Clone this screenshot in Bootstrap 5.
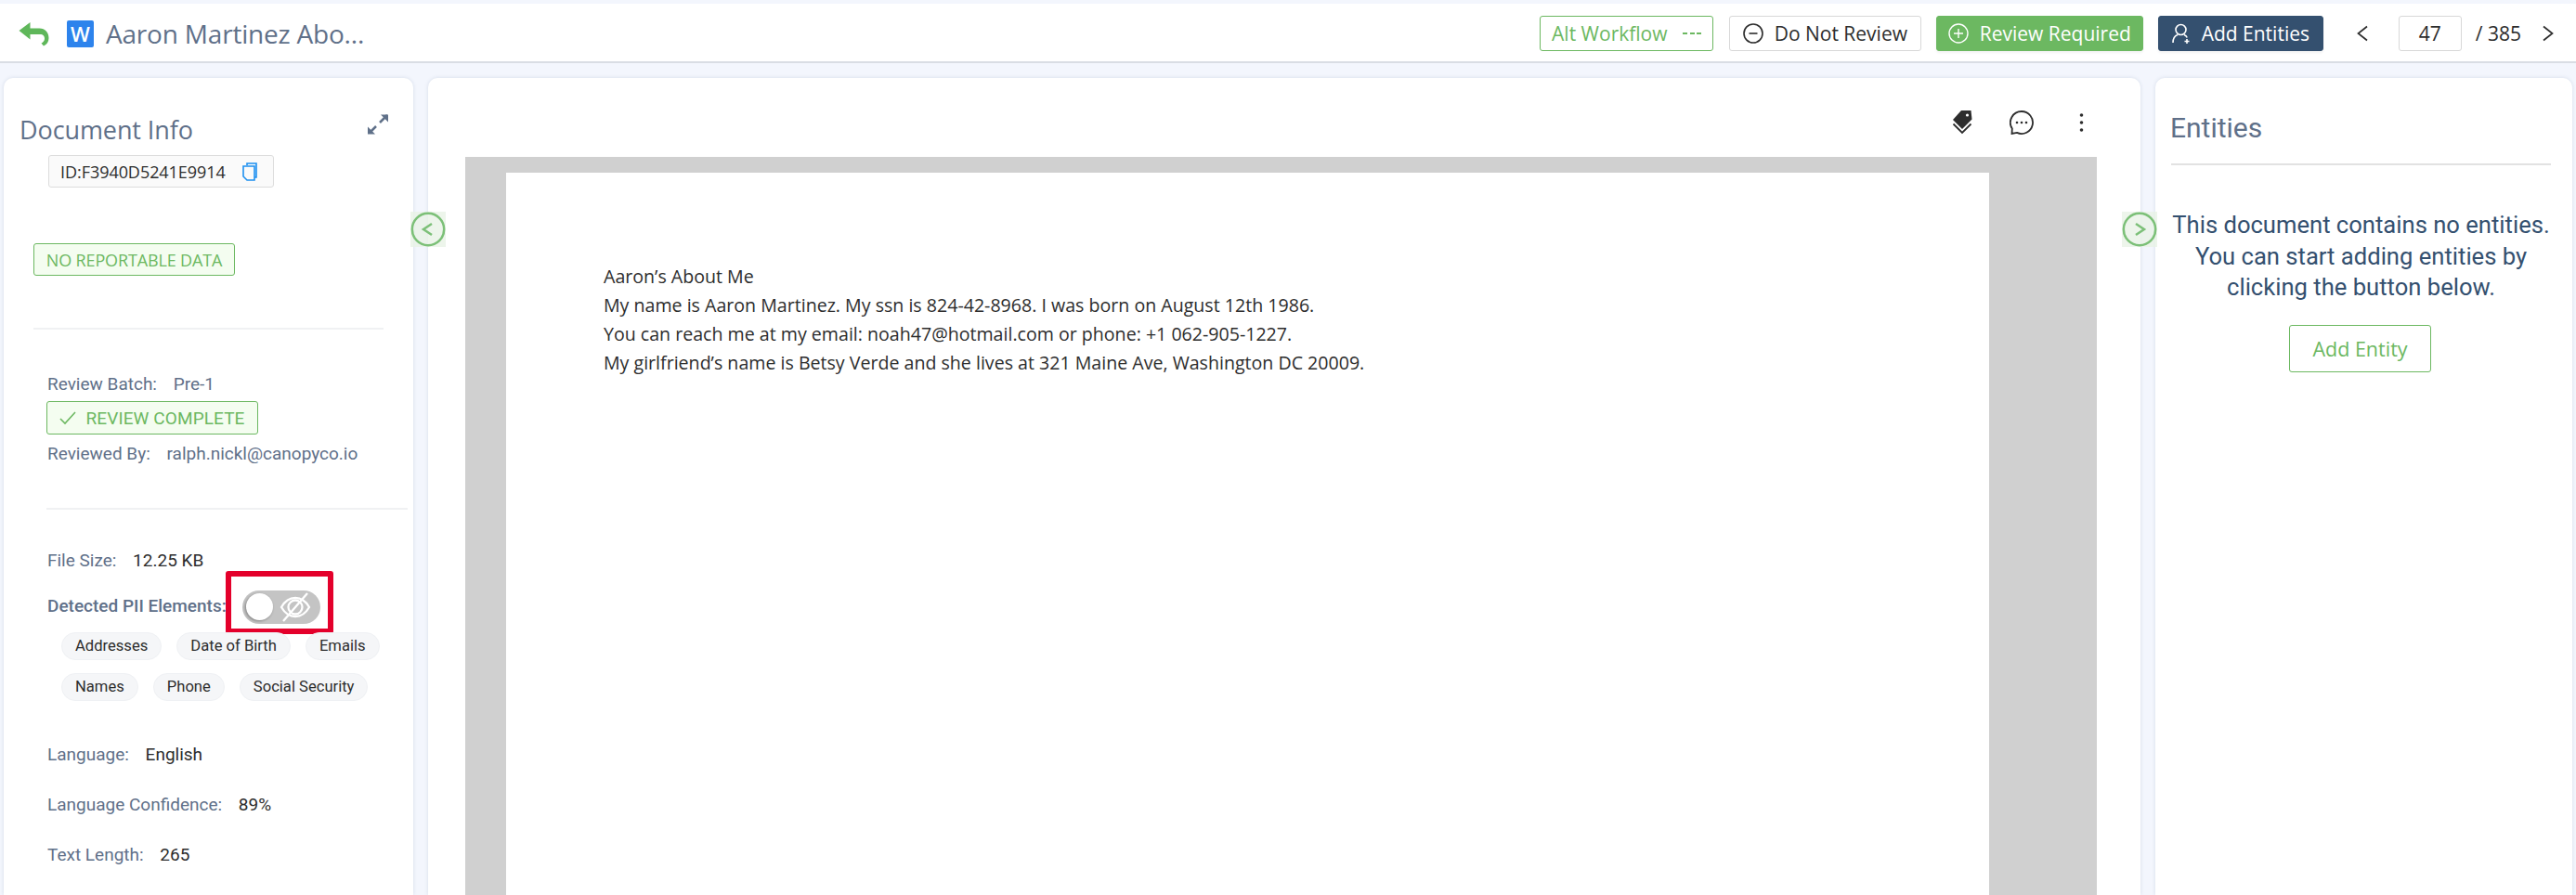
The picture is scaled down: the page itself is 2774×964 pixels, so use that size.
<!DOCTYPE html>
<html lang="en">
<head>
<meta charset="utf-8">
<title>Document review</title>
<link href="https://cdn.jsdelivr.net/npm/bootstrap@5.3.0/dist/css/bootstrap.min.css" rel="stylesheet">
<style>
:root{--g:#6cb861;--navy:#34506f;--slate:#5f7089;--ink:#2d2d2d;--seg:"Open Sans","Noto Sans",sans-serif;--rob:Roboto,sans-serif;}
html,body{height:964px;overflow:hidden}
body{background:#f3f6fd;font-family:var(--rob);color:var(--ink);width:2774px;padding-top:4px}
.topbar{height:64px;background:#fff;border-bottom:2px solid #d9dde4;padding:2px 24px 0 20px}
.doc-title{font-family:var(--seg);font-size:28px;color:var(--slate);margin-left:13px;line-height:1;letter-spacing:-.2px}
.w-logo{width:29px;height:29px;background:#2d83ec;border-radius:2px;color:#fff;font:600 22px/29px var(--seg);text-align:center;margin-left:19px}
.tb-btn{height:38px;padding:0;font-family:var(--seg);font-size:21px;line-height:1;border-radius:3px;display:flex;align-items:center;justify-content:center;gap:12px}
.tb-alt{width:187px;color:var(--g);border:1px solid var(--g);background:#fff;gap:16px}
.tb-dnr{width:207px;margin-left:17px;color:var(--ink);border:1px solid #d8d8d8;background:#fff}
.tb-req{width:223px;margin-left:16px;background:var(--g);color:#fff;border:1px solid var(--g);box-shadow:0 2px 3px #0000000d}
.tb-add{width:178px;margin-left:16px;background:var(--navy);color:#fff;border:1px solid var(--navy);box-shadow:0 2px 3px #0000000d}
.pager-in{width:68px;height:38px;margin:0 15px 0 33px;padding:0;border-radius:3px;text-align:center;font:21px var(--seg);color:var(--ink);border-color:#d8d8d8}
.pager-of{font:21px var(--seg);color:var(--ink);margin-right:23px}
.chev{color:var(--ink);margin-left:36px;display:block}
.work{gap:16px;padding:16px 4px 0;height:896px}
.pane{background:#fff;border-radius:10px 10px 0 0;box-shadow:0 0 4px #1f3a6b22;height:880px;overflow:hidden}
.pane-l{width:441px;flex:none;padding:0 6px 0 17px}
.pane-c{width:1844px;flex:none;padding:0 47px 0 40px}
.pane-r{width:449px;flex:none;padding:0 24px 0 17px}
.pane-h{color:var(--slate);line-height:32px}
.info-h{font-family:var(--seg);font-size:27px;margin-top:38px;line-height:36px;letter-spacing:-.1px}
.id-tag{margin:9px 0 0 31px;width:243px;height:35px;background:#fafafa;border:1px solid #ddd;border-radius:3px;font:18px var(--seg);padding-left:12px;gap:18px;letter-spacing:-.05px}
.flag{border:1px solid var(--g);background:#f4fdf0;color:var(--g);border-radius:3px;font:18px/1 var(--seg);letter-spacing:-.15px}
.flag-nr{margin:60px 0 0 15px;width:217px;height:35px}
.flag-rc{margin:6px 0 0 29px;width:228px;height:36px;gap:10px;font-family:var(--rob);font-size:19px;letter-spacing:.1px}
.soft-hr{height:2px;background:#f0f1f3;border:0;opacity:1;margin:0}
.hr-1{margin:56px 0 0 15px;width:377px}
.hr-2{margin:46px 0 0 29px;width:389px}
.fact{font-size:19px;color:var(--slate);margin-left:30px;line-height:24px}
.fact b{font-weight:400;margin-left:13px}
.fact .dark{color:var(--ink)}
.pii{font-weight:500;color:var(--slate);font-size:19px;margin-left:30px;width:192px;white-space:nowrap;line-height:24px;padding-top:8px}
.pii-mark{width:116px;height:68px;border:6px solid #e4002b;border-radius:3px;flex:none;padding:0 0 5px 12px}
.tgl{width:84px;height:36px;border-radius:18px;background:#c4c4c4;position:relative;display:block}
.tgl i{position:absolute;left:4px;top:3px;width:29px;height:29px;border-radius:50%;background:#fff;box-shadow:-1px 1px 3px #0005}
.tgl svg{position:absolute;left:40px;top:1px}
.chip-row{margin-left:45px;gap:16px;margin-top:14px}
.chip{height:30px;line-height:28px;border:1px solid #eff1f4;background:#f5f6f8;border-radius:15px;font-size:16.6px;padding:0 14px;color:var(--ink)}
.tools{height:85px;padding-right:14px;padding-top:11px;align-items:center}
.tools .t-tag{margin-right:40px}
.tools .t-chat{margin-right:49px}
.viewer{background:#d0d0d0;height:795px;padding:17px 115px 0 44px}
.sheet{background:#fff;width:1597px;height:778px;padding-top:96px;padding-left:105px;font:19.6px/31px var(--seg);color:var(--ink)}
.sheet p{margin:0}
.ent-h{margin:38px 0 0 -1px;line-height:32px;font-size:30px}
.ent-hr{height:2px;background:#e2e2e2;margin:22px 0 0;border:0;opacity:1;width:409px}
.ent-msg{width:409px;text-align:center;font-size:25.6px;line-height:33.5px;color:var(--navy);margin-top:48px}
.ent-btn{display:block;width:153px;height:51px;margin:23px 0 0 127px;border:1px solid var(--g);border-radius:3px;color:var(--g);background:#fff;font:21.5px var(--seg);padding:0}
.rail{position:absolute;top:228px;width:38px;height:38px;background:#e9f3e6cc}
.rail-l{left:442px}.rail-r{left:2285px}
.rail svg{display:block}
.expand{position:absolute;left:395px;top:122px}
</style>
</head>
<body>
<header class="topbar d-flex align-items-center">
  <svg width="33" height="27" viewBox="0 0 33 27" fill="none"><path d="M12.500 1 0.500 10 12.500 19.500V14H23C26.500 14 28 16 28 18.500C28 21 26.500 22.500 24.500 23.500L27 26.500C30.500 25 32.500 22 32.500 18C32.500 12 28.500 7.500 22.500 7.500H12.500z" fill="#5fb75a"/></svg>
  <div class="w-logo">W</div>
  <div class="doc-title">Aaron Martinez Abo...</div>
  <div class="ms-auto d-flex align-items-center">
    <button class="btn tb-btn tb-alt">Alt Workflow <svg width="20" height="4" viewBox="0 0 20 4" fill="#6cb861"><rect y="1" width="5" height="2"/><rect x="8" y="1" width="5" height="2"/><rect x="15" y="1" width="5" height="2"/></svg></button>
    <button class="btn tb-btn tb-dnr"><svg width="22" height="22" viewBox="0 0 22 22" fill="none" stroke="#2d2d2d" stroke-width="1.6"><circle cx="11" cy="11" r="10"/><path d="M6.5 11h9"/></svg>Do Not Review</button>
    <button class="btn tb-btn tb-req"><svg width="22" height="22" viewBox="0 0 22 22" fill="none" stroke="#fff" stroke-width="1.4"><circle cx="11" cy="11" r="10"/><path d="M6 11h10M11 6v10"/></svg>Review Required</button>
    <button class="btn tb-btn tb-add"><svg width="20" height="22" viewBox="0 0 20 22" fill="none" stroke="#fff" stroke-width="1.6"><circle cx="9.5" cy="7" r="5.5"/><path d="M1 21c0-5 2-7.5 5-8.5M13 12.5c1.5.5 2.5 1.300 3.200 3"/><path d="M16 17v5M13.500 19.500h5"/></svg>Add Entities</button>
    <svg class="chev" width="12" height="18" viewBox="0 0 12 18" fill="none" stroke="#2d2d2d" stroke-width="1.700"><path d="M11 1.500 1.500 9 11 16.500"/></svg>
    <input class="form-control pager-in" value="47" aria-label="Page">
    <span class="pager-of">/ 385</span>
    <svg width="12" height="18" viewBox="0 0 12 18" fill="none" stroke="#2d2d2d" stroke-width="1.700"><path d="M1 1.500 10.500 9 1 16.500"/></svg>
  </div>
</header>

<main class="work d-flex position-relative">
  <section class="pane pane-l">
    <div class="pane-h info-h">Document Info</div>
    <div class="id-tag d-flex align-items-center">ID:F3940D5241E9914
      <svg width="16" height="20" viewBox="0 0 16 20" fill="none" stroke="#1e90f0" stroke-width="1.600"><path d="M5 3V1h10v15h-2"/><path d="M1 4h12v15H5l-4-4z"/></svg>
    </div>
    <div class="flag flag-nr d-flex align-items-center justify-content-center">NO REPORTABLE DATA</div>
    <hr class="soft-hr hr-1">
    <div class="fact" style="margin-top:47px">Review Batch:<b>&nbsp;Pre-1</b></div>
    <div class="flag flag-rc d-flex align-items-center justify-content-center"><svg width="18" height="15" viewBox="0 0 18 15" fill="none" stroke="#6cb861" stroke-width="1.600"><path d="M1 8l5 5L17 1"/></svg>REVIEW COMPLETE</div>
    <div class="fact" style="margin-top:9px">Reviewed By:<b>&nbsp;ralph.nickl@canopyco.io</b></div>
    <hr class="soft-hr hr-2">
    <div class="fact" style="margin-top:43px">File Size:<b class="dark">&nbsp;12.25 KB</b></div>
    <div class="d-flex align-items-center" style="margin-top:-1px">
      <div class="pii">Detected PII Elements:</div>
      <div class="pii-mark d-flex align-items-end"><span class="tgl"><i></i><svg width="34" height="34" viewBox="0 0 34 34" fill="none" stroke="#fff" stroke-width="2.300"><path d="M2 17C6 10 11 7 17 7s11 3 15 10c-4 7-9 10-15 10S6 24 2 17z"/><circle cx="17" cy="17" r="7.500"/><path d="M4 32 30 2"/></svg></span></div>
    </div>
    <div class="d-flex chip-row" style="margin-top:-2px"><span class="chip">Addresses</span><span class="chip">Date of Birth</span><span class="chip">Emails</span></div>
    <div class="d-flex chip-row"><span class="chip">Names</span><span class="chip">Phone</span><span class="chip">Social Security</span></div>
    <div class="fact" style="margin-top:46px">Language:<b class="dark">&nbsp;English</b></div>
    <div class="fact" style="margin-top:30px">Language Confidence:<b class="dark">&nbsp;89%</b></div>
    <div class="fact" style="margin-top:30px">Text Length:<b class="dark">&nbsp;265</b></div>
  </section>

  <section class="pane pane-c">
    <div class="tools d-flex justify-content-end">
      <svg class="t-tag" width="22" height="26" viewBox="0 0 22 26" fill="#2d2d2d"><path d="M10 0h10.500l1 9.500L11 20 1 10z"/><circle cx="16.500" cy="5" r="1.600" fill="#fff"/><path d="M1.500 14.500 11 24 20.500 14.500" fill="none" stroke="#2d2d2d" stroke-width="1.800"/></svg>
      <svg class="t-chat" width="26" height="26" viewBox="0 0 26 26" fill="none" stroke="#2d2d2d" stroke-width="1.800"><path d="M13 1a12 12 0 1 1-5 22.900L2.500 25 2.800 19.500A12 12 0 0 1 13 1z"/><g fill="#2d2d2d" stroke="none"><circle cx="8" cy="13" r="1.300"/><circle cx="13" cy="13" r="1.300"/><circle cx="18" cy="13" r="1.300"/></g></svg>
      <svg width="5" height="20" viewBox="0 0 5 20" fill="#2d2d2d"><circle cx="2.500" cy="2" r="1.800"/><circle cx="2.500" cy="10" r="1.800"/><circle cx="2.500" cy="18" r="1.800"/></svg>
    </div>
    <div class="viewer">
      <div class="sheet">
        <p>Aaron’s About Me</p>
        <p>My name is Aaron Martinez. My ssn is 824-42-8968. I was born on August 12th 1986.</p>
        <p>You can reach me at my email: noah47@hotmail.com or phone: +1 062-905-1227.</p>
        <p>My girlfriend’s name is Betsy Verde and she lives at 321 Maine Ave, Washington DC 20009.</p>
      </div>
    </div>
  </section>

  <section class="pane pane-r">
    <div class="pane-h ent-h">Entities</div>
    <hr class="ent-hr">
    <div class="ent-msg">This document contains no entities.<br>You can start adding entities by<br>clicking the button below.</div>
    <button class="btn ent-btn">Add Entity</button>
  </section>
</main>

<svg class="expand" width="24" height="24" viewBox="0 0 24 24" fill="#5f7089" stroke="#5f7089" stroke-width="2.500"><path d="M14 10 22 2" /><path d="M3 21l7-7"/><path d="M15 1.500h8v8z" stroke="none"/><path d="M1 14.500v8h8z" stroke="none"/></svg>
<div class="rail rail-l"><svg width="38" height="38" viewBox="0 0 38 38" fill="none" stroke="#7cc078" stroke-width="2.500"><circle cx="19" cy="19" r="17.200"/><path d="M23 13l-9 6 9 6"/></svg></div>
<div class="rail rail-r"><svg width="38" height="38" viewBox="0 0 38 38" fill="none" stroke="#7cc078" stroke-width="2.500"><circle cx="19" cy="19" r="17.200"/><path d="M15 13l9 6-9 6"/></svg></div>
<script src="https://cdn.jsdelivr.net/npm/bootstrap@5.3.0/dist/js/bootstrap.bundle.min.js"></script>
</body>
</html>
